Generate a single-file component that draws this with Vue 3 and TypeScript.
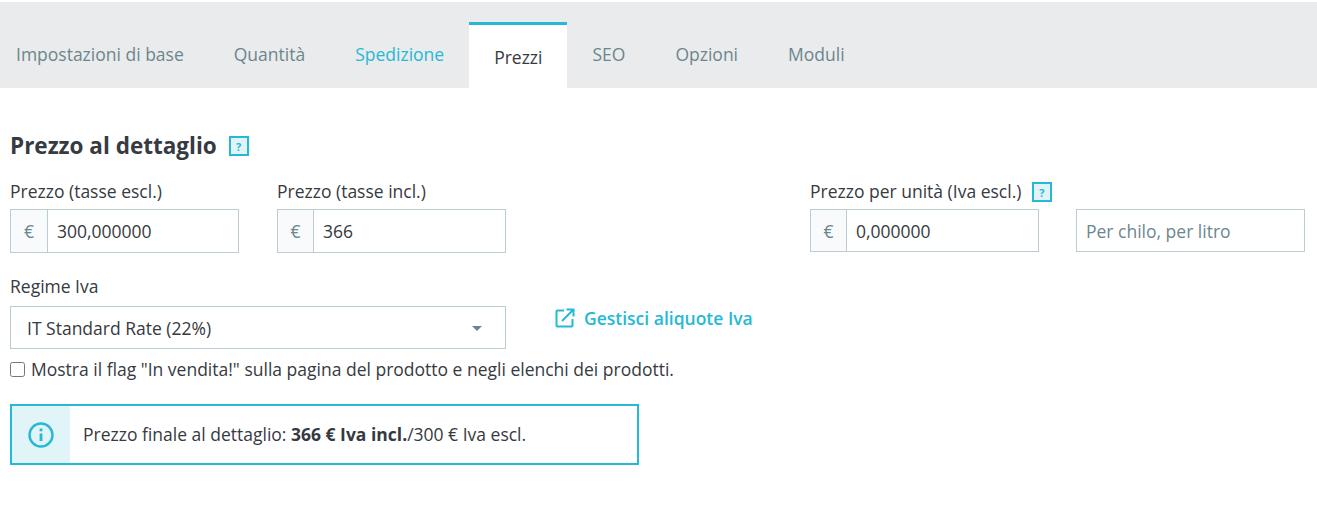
<template>
  <div class="page">
    <nav class="tabs">
      <a
        v-for="tab in tabs"
        :key="tab.label"
        :class="['tab', { active: tab.active, linked: tab.linked }]"
      >{{ tab.label }}</a>
    </nav>

    <section class="content">
      <h2 class="title">
        Prezzo al dettaglio
        <span class="help">?</span>
      </h2>

      <div class="price-row">
        <div class="field">
          <label>Prezzo (tasse escl.)</label>
          <div class="input-group">
            <span class="prefix">€</span>
            <input type="text" value="300,000000" />
          </div>
        </div>
        <div class="field">
          <label>Prezzo (tasse incl.)</label>
          <div class="input-group">
            <span class="prefix">€</span>
            <input type="text" value="366" />
          </div>
        </div>
        <div class="field unit">
          <label>Prezzo per unità (Iva escl.) <span class="help">?</span></label>
          <div class="unit-inputs">
            <div class="input-group">
              <span class="prefix">€</span>
              <input type="text" value="0,000000" />
            </div>
            <div class="input-group">
              <input type="text" placeholder="Per chilo, per litro" />
            </div>
          </div>
        </div>
      </div>

      <div class="tax-row">
        <div class="tax-field">
          <label>Regime Iva</label>
          <div class="select">
            <span>IT Standard Rate (22%)</span>
            <i class="caret"></i>
          </div>
        </div>
        <a class="tax-link">
          <svg width="20" height="20" viewBox="0 0 20 20" fill="none" stroke="#25b9d7" stroke-width="2">
            <path d="M9 2.5H2.5a1 1 0 0 0-1 1v14a1 1 0 0 0 1 1h14a1 1 0 0 0 1-1V11" />
            <path d="M7 13L17.5 2.5M11.5 1.5h7v7" />
          </svg>
          Gestisci aliquote Iva
        </a>
      </div>

      <label class="check">
        <input type="checkbox" />
        Mostra il flag "In vendita!" sulla pagina del prodotto e negli elenchi dei prodotti.
      </label>

      <div class="alert">
        <div class="alert-icon">
          <svg width="26" height="26" viewBox="0 0 26 26" fill="none" stroke="#25b9d7">
            <circle cx="13" cy="13" r="11.5" stroke-width="2.4" />
            <path d="M13 11.5v7.5" stroke-width="2.8" />
            <path d="M13 6.5v2.8" stroke-width="2.8" />
          </svg>
        </div>
        <p>Prezzo finale al dettaglio: <b>366 € Iva incl.</b>/300 € Iva escl.</p>
      </div>
    </section>
  </div>
</template>

<script setup lang="ts">
interface Tab {
  label: string
  active?: boolean
  linked?: boolean
}

const tabs: Tab[] = [
  { label: 'Impostazioni di base' },
  { label: 'Quantità' },
  { label: 'Spedizione', linked: true },
  { label: 'Prezzi', active: true },
  { label: 'SEO' },
  { label: 'Opzioni' },
  { label: 'Moduli' }
]
</script>

<style>
body {
  background: #fff;
}
</style>

<style scoped>
.page {
  width: 1317px;
  height: 521px;
  padding-top: 2px;
  box-sizing: border-box;
  overflow: hidden;
  font-family: "Open Sans", "Noto Sans", sans-serif;
  font-size: 17.5px;
  color: #363a41;
}

.tabs {
  display: flex;
  align-items: flex-end;
  height: 86px;
  background: #eaebec;
}

.tab {
  height: 63px;
  padding: 0 25px;
  line-height: 58px;
  color: #6c868e;
}

.tab:first-child {
  padding-left: 16px;
}

.tab.linked {
  color: #25b9d7;
}

.tab.active {
  background: #fff;
  border-top: 3px solid #25b9d7;
  height: 63px;
  line-height: 64px;
  color: #363a41;
}

.content {
  padding: 43px 12px 0 10px;
}

.title {
  display: flex;
  align-items: center;
  gap: 12px;
  margin: 0 0 20px;
  height: 28px;
  font-size: 22.5px;
  font-weight: 700;
  line-height: 27px;
}

.title .help {
  margin-top: 2px;
}

.help {
  display: inline-flex;
  align-items: center;
  justify-content: center;
  width: 20px;
  height: 20px;
  box-sizing: border-box;
  border: 2px solid #25b9d7;
  background: #e0f4f8;
  color: #25b9d7;
  font-size: 11px;
  font-weight: 700;
  line-height: 1;
  vertical-align: middle;
}

label {
  display: block;
}

.price-row {
  display: flex;
}

.field {
  width: 229px;
  margin-right: 38px;
}

.field label {
  height: 24px;
  line-height: 24px;
  margin-bottom: 6px;
}

.field label .help {
  margin-left: 6px;
  margin-top: -2px;
}

.unit {
  width: 495px;
  margin-left: 266px;
  margin-right: 0;
}

.unit-inputs {
  display: flex;
  gap: 37px;
  margin-top: 1px;
}

.unit-inputs .input-group {
  width: 229px;
  height: 43px;
}

.input-group {
  display: flex;
  height: 44px;
  box-sizing: border-box;
  border: 1px solid #bbcdd2;
  background: #fff;
}

.prefix {
  display: flex;
  align-items: center;
  justify-content: center;
  width: 36px;
  flex: none;
  border-right: 1px solid #bbcdd2;
  background: #f8fafb;
  color: #6c868e;
}

.field:nth-child(n + 2) .prefix {
  width: 35px;
}

.input-group input {
  flex: 1;
  min-width: 0;
  padding: 0 9px;
  border: 0;
  outline: 0;
  background: transparent;
  font: inherit;
  color: #363a41;
}

.input-group input::placeholder {
  color: #6c868e;
  opacity: 1;
}

.tax-row {
  display: flex;
  margin-top: 21px;
}

.tax-field {
  width: 496px;
}

.tax-field label {
  height: 24px;
  line-height: 24px;
  margin-bottom: 8px;
}

.select {
  display: flex;
  align-items: center;
  justify-content: space-between;
  height: 43px;
  box-sizing: border-box;
  padding: 0 23px 0 16px;
  border: 1px solid #bbcdd2;
}

.caret {
  width: 0;
  height: 0;
  margin-top: 1px;
  border-left: 5px solid transparent;
  border-right: 5px solid transparent;
  border-top: 5px solid #6c868e;
}

.tax-link {
  display: flex;
  align-items: center;
  gap: 9px;
  height: 24px;
  margin: 32px 0 0 49px;
  color: #25b9d7;
  font-weight: 600;
}

.check {
  display: flex;
  align-items: center;
  gap: 6px;
  height: 24px;
  margin-top: 8px;
}

.check input {
  width: 15px;
  height: 15px;
  margin: 0;
}

.alert {
  display: flex;
  width: 629px;
  height: 61px;
  box-sizing: border-box;
  margin-top: 23px;
  border: 2px solid #25b9d7;
}

.alert-icon {
  display: flex;
  align-items: center;
  justify-content: center;
  width: 58px;
  flex: none;
  background: #e1f4f8;
}

.alert p {
  margin: 0 0 0 13px;
  line-height: 57px;
}

.alert b {
  font-weight: 700;
}
</style>
